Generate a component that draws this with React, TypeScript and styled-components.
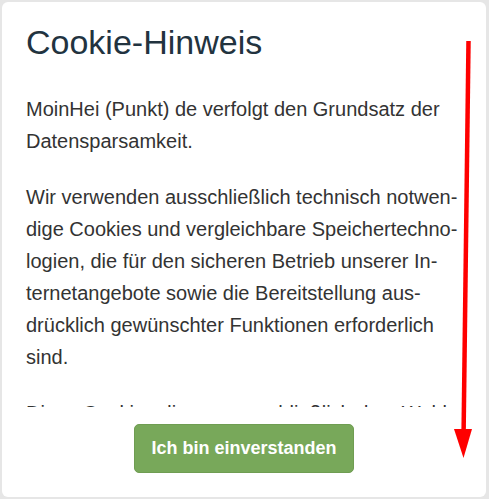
import React from "react";
import styled, { createGlobalStyle } from "styled-components";

const Global = createGlobalStyle`
  html, body { margin: 0; padding: 0; }
  body {
    background: #e6e6e6;
    font-family: "Liberation Sans", Arial, Helvetica, sans-serif;
    width: 489px;
    height: 499px;
    overflow: hidden;
  }
`;

const Page = styled.div`
  position: relative;
  padding: 2px 3px 2px 2px;
  height: 499px;
  box-sizing: border-box;
`;

const Card = styled.div`
  background: #fff;
  border-radius: 6px;
  height: 100%;
  display: flex;
  flex-direction: column;
  overflow: hidden;
`;

const Scroll = styled.div`
  flex: 1;
  overflow: hidden;
  padding: 20px 22px 0 24px;
`;

const Title = styled.h1`
  margin: 0 0 30px;
  font-size: 34px;
  line-height: 1.2;
  font-weight: 400;
  color: #22333f;
`;

const Para = styled.p`
  margin: 0 0 24px;
  font-size: 20px;
  line-height: 32px;
  color: #333;
  hyphens: manual;
`;

const Footer = styled.div`
  display: flex;
  justify-content: center;
  padding: 17px 0 24px;
`;

const Button = styled.button`
  font-family: "Liberation Sans", Arial, Helvetica, sans-serif;
  font-size: 18px;
  font-weight: 700;
  color: #fff;
  background: #78a85a;
  border: 1px solid #6f9d52;
  border-radius: 5px;
  height: 49px;
  padding: 0 16px;
  cursor: pointer;
`;

const Arrow = styled.svg`
  position: absolute;
  left: 0;
  top: 0;
  pointer-events: none;
`;

export default function App() {
  return (
    <>
      <Global />
      <Page>
        <Card>
          <Scroll>
            <Title>Cookie-Hinweis</Title>
            <Para>MoinHei (Punkt) de verfolgt den Grundsatz der Datensparsamkeit.</Para>
            <Para>
              Wir verwenden ausschließlich technisch notwen&shy;dige Cookies und vergleichbare Speichertechno&shy;logien, die für den sicheren Betrieb unserer In&shy;ternetangebote sowie die Bereitstellung aus&shy;drücklich gewünschter Funktionen erforderlich sind.
            </Para>
            <Para>
              Diese Cookies dienen ausschließlich dem Wohl unserer Besucher und werden nicht zu Werbezwecken genutzt.
            </Para>
          </Scroll>
          <Footer>
            <Button>Ich bin einverstanden</Button>
          </Footer>
        </Card>
        <Arrow width="489" height="499" viewBox="0 0 489 499">
          <line x1="468.5" y1="41" x2="463.5" y2="440" stroke="#ff0000" strokeWidth="4.5" />
          <polygon points="454,429 472,429 463.5,458" fill="#ff0000" />
        </Arrow>
      </Page>
    </>
  );
}
